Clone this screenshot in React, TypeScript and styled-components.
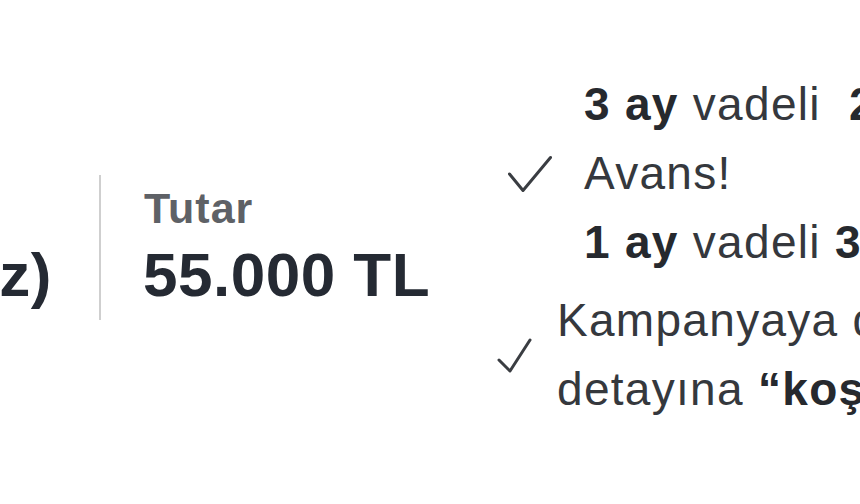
import React from "react";
import styled, { createGlobalStyle } from "styled-components";

const Global = createGlobalStyle`
  html, body {
    margin: 0;
    padding: 0;
    background: #ffffff;
    overflow: hidden;
  }
  body {
    font-family: "Liberation Sans", Arial, sans-serif;
  }
`;

const Page = styled.div`
  width: 860px;
  height: 504px;
  overflow: hidden;
  display: flex;
  align-items: center;
  padding-bottom: 10px;
  box-sizing: border-box;
  background: #ffffff;
`;

const Summary = styled.div`
  display: flex;
  align-items: center;
  flex-shrink: 0;
`;

const ClipCell = styled.div`
  width: 52px;
  overflow: hidden;
  display: flex;
  justify-content: flex-end;
  flex-shrink: 0;
`;

const Column = styled.div<{ $width?: number }>`
  display: flex;
  flex-direction: column;
  flex-shrink: 0;
  box-sizing: border-box;
  ${(p) => (p.$width ? `width: ${p.$width}px;` : "")}
`;

const Label = styled.div`
  font-size: 43px;
  line-height: 48px;
  font-weight: 700;
  color: #5e6166;
  letter-spacing: 1px;
  margin-bottom: 8px;
  padding-left: 1px;
  white-space: nowrap;
`;

const Value = styled.div`
  font-size: 62px;
  line-height: 70px;
  font-weight: 700;
  letter-spacing: 0.5px;
  color: #252a33;
  white-space: nowrap;
`;

const Divider = styled.div`
  width: 2px;
  height: 145px;
  background: #cfcfcf;
  margin: 0 42px 0 47px;
  flex-shrink: 0;
`;

const List = styled.ul`
  list-style: none;
  margin: 0;
  padding: 0;
  display: flex;
  flex-direction: column;
  gap: 9px;
  flex-shrink: 0;
`;

const Item = styled.li<{ $indent: number; $gap: number }>`
  display: flex;
  align-items: center;
  padding-left: ${(p) => p.$indent}px;
  gap: ${(p) => p.$gap}px;
`;

const Check = styled.svg`
  flex-shrink: 0;
  display: block;
`;

const Text = styled.div`
  font-size: 46px;
  line-height: 69px;
  letter-spacing: 1.3px;
  color: #35383d;
  white-space: nowrap;
`;

const Strong = styled.b`
  font-weight: 700;
  color: #26292e;
`;

type CheckProps = { w: number; h: number; points: string };
const CheckIcon = ({ w, h, points }: CheckProps) => (
  <Check width={w} height={h} viewBox={`0 0 ${w} ${h}`}>
    <polyline
      points={points}
      fill="none"
      stroke="#3a3d42"
      strokeWidth={3}
      strokeLinecap="round"
      strokeLinejoin="round"
    />
  </Check>
);

export default function App() {
  return (
    <>
      <Global />
      <Page>
        <Summary>
          <ClipCell>
            <Column>
              <Label>Vade</Label>
              <Value>12 Ay (Faiz)</Value>
            </Column>
          </ClipCell>
          <Divider />
          <Column $width={354}>
            <Label>Tutar</Label>
            <Value>55.000 TL</Value>
          </Column>
        </Summary>
        <List>
          <Item $indent={10} $gap={31}>
            <CheckIcon w={46} h={40} points="2.5,20 16,36.5 43.5,3.5" />
            <Text>
              <Strong>3 ay</Strong> vadeli{"\u00a0 "}
              <Strong>25.000 TL</Strong>
              <br />
              Avans!
              <br />
              <Strong>1 ay</Strong> vadeli <Strong>30.000 TL</Strong>
            </Text>
          </Item>
          <Item $indent={0} $gap={25}>
            <CheckIcon w={35} h={37} points="2,23 13,34 33,3" />
            <Text>
              Kampanyaya dair tüm
              <br />
              detayına <Strong>“koşullar”</Strong> sayfasından
            </Text>
          </Item>
        </List>
      </Page>
    </>
  );
}
